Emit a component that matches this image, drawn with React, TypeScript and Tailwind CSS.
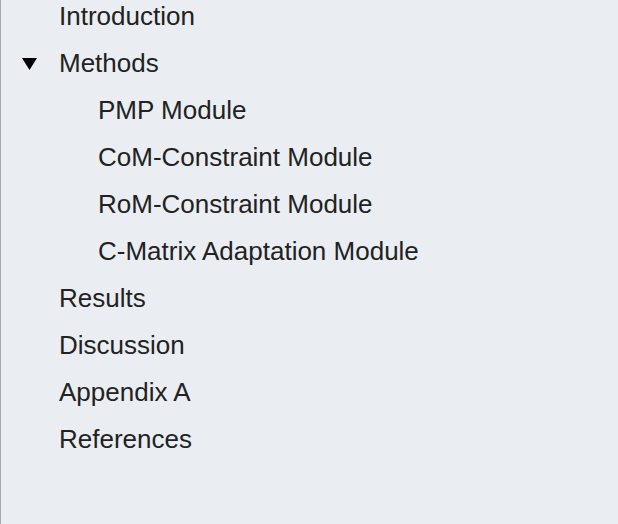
const sections: { label: string; level: number; open?: boolean }[] = [
  { label: "Introduction", level: 0 },
  { label: "Methods", level: 0, open: true },
  { label: "PMP Module", level: 1 },
  { label: "CoM-Constraint Module", level: 1 },
  { label: "RoM-Constraint Module", level: 1 },
  { label: "C-Matrix Adaptation Module", level: 1 },
  { label: "Results", level: 0 },
  { label: "Discussion", level: 0 },
  { label: "Appendix A", level: 0 },
  { label: "References", level: 0 },
];

export default function App() {
  return (
    <div className="h-[524px] w-[618px] overflow-hidden border-l border-[#a8a8a8] bg-[#eaeef2] font-['Liberation_Sans',Arial,sans-serif] text-[#222]">
      <ul className="-mt-[7px]">
        {sections.map((s) => (
          <li
            key={s.label}
            className={`flex h-[47px] items-center text-[26px] leading-[47px] ${
              s.level === 1 ? "pl-[97px]" : "pl-[58px]"
            }`}
          >
            {s.open && (
              <svg
                width="15"
                height="12"
                viewBox="0 0 15 12"
                className="-ml-[37px] mr-[22px] mt-[1px]"
              >
                <polygon points="0,0 15,0 7.5,12" fill="#000" />
              </svg>
            )}
            {s.label}
          </li>
        ))}
      </ul>
    </div>
  );
}
